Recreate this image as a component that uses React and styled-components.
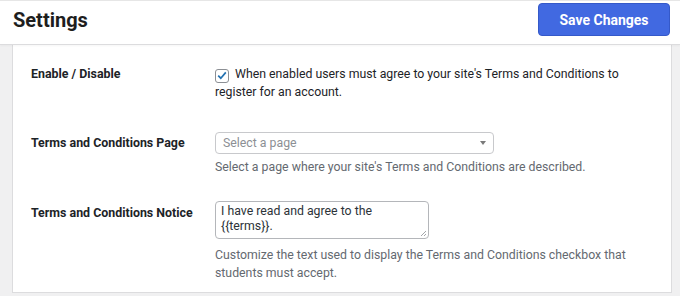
import React from "react";
import styled, { createGlobalStyle } from "styled-components";

const GlobalStyle = createGlobalStyle`
  html, body {
    margin: 0;
    padding: 0;
    background: #f0f0f1;
    font-family: Roboto, "Liberation Sans", Arial, sans-serif;
    color: #1d2327;
  }
`;

const Page = styled.div`
  width: 680px;
  height: 296px;
  overflow: hidden;
`;

const Header = styled.header`
  display: flex;
  flex-flow: row nowrap;
  justify-content: space-between;
  align-items: center;
  height: 33px;
  padding: 2px 10px 8px 13px;
  background: #ffffff;
  border-top: 1px solid #e6e6e6;
  border-bottom: 1px solid #dcdcde;
  box-shadow: 0 1px 2px rgba(0, 0, 0, 0.04);
  position: relative;
  z-index: 1;
`;

const Title = styled.h1`
  margin: 0;
  font-size: 20px;
  font-weight: 700;
  color: #1e1e1e;
`;

const SaveButton = styled.button`
  width: 132px;
  height: 33px;
  border: 1px solid #3559c9;
  border-radius: 4px;
  background: #4169e1;
  color: #ffffff;
  font-family: inherit;
  font-size: 14px;
  font-weight: 700;
  cursor: pointer;
`;

const Main = styled.main`
  padding: 0 8px 0 12px;
`;

const Card = styled.section`
  background: #ffffff;
  border: 1px solid #dcdcde;
  border-top: none;
  padding: 20px 18px 10px 18px;
`;

const Row = styled.div`
  display: grid;
  grid-template-columns: 184px 1fr;
  margin-top: ${(props) => props.$top || 0}px;
`;

const Label = styled.div`
  font-size: 12.4px;
  font-weight: 700;
  line-height: 18px;
  padding-top: ${(props) => props.$offset || 0}px;
  color: #1d2327;
`;

const Field = styled.div`
  font-size: 12.3px;
  line-height: 18px;
  color: #1d2327;
`;

const CheckText = styled.label`
  display: block;
`;

const Box = styled.span`
  display: inline-flex;
  align-items: center;
  justify-content: center;
  box-sizing: border-box;
  width: 14px;
  height: 14px;
  margin-right: 6px;
  vertical-align: -2px;
  border: 1px solid #8c8f94;
  border-radius: 3px;
  background: #ffffff;
`;

const SelectBox = styled.div`
  display: flex;
  align-items: center;
  justify-content: space-between;
  box-sizing: border-box;
  width: 279px;
  height: 22px;
  padding: 0 7px 0 7px;
  border: 1px solid #c8c9cc;
  border-radius: 4px;
  color: #8c8f94;
`;

const Caret = styled.span`
  width: 0;
  height: 0;
  border-left: 3.5px solid transparent;
  border-right: 3.5px solid transparent;
  border-top: 4px solid #7a7a7a;
`;

const Area = styled.div`
  position: relative;
  box-sizing: border-box;
  width: 214px;
  height: 38px;
  padding: 2px 5px;
  border: 1px solid #b4b6ba;
  border-radius: 4px;
  line-height: 15px;
  color: #2c3338;
`;

const Grip = styled.svg`
  position: absolute;
  right: 1px;
  bottom: 1px;
`;

const Help = styled.p`
  margin: ${(props) => props.$top || 4}px 0 0;
  color: #646970;
  font-size: 12.3px;
  line-height: 18px;
`;

export default function App() {
  return (
    <Page>
      <GlobalStyle />
      <Header>
        <Title>Settings</Title>
        <SaveButton>Save Changes</SaveButton>
      </Header>
      <Main>
        <Card>
          <Row>
            <Label>Enable / Disable</Label>
            <Field>
              <CheckText>
                <Box>
                  <svg width="10" height="9" viewBox="0 0 10 9">
                    <path d="M1.2 4.6 L3.8 7.2 L8.8 1.4" fill="none" stroke="#2271b1" strokeWidth="1.7" />
                  </svg>
                </Box>
                When enabled users must agree to your site's Terms and Conditions to register for an account.
              </CheckText>
            </Field>
          </Row>
          <Row $top={31}>
            <Label $offset={2}>Terms and Conditions Page</Label>
            <Field>
              <SelectBox>
                <span>Select a page</span>
                <Caret />
              </SelectBox>
              <Help>Select a page where your site's Terms and Conditions are described.</Help>
            </Field>
          </Row>
          <Row $top={25}>
            <Label $offset={3}>Terms and Conditions Notice</Label>
            <Field>
              <Area>
                I have read and agree to the
                <br />
                {"{{terms}}."}
                <Grip width="7" height="7" viewBox="0 0 7 7">
                  <path d="M6 1 L1 6 M6 4 L4 6" stroke="#8c8f94" strokeWidth="0.8" />
                </Grip>
              </Area>
              <Help $top={7}>
                Customize the text used to display the Terms and Conditions checkbox that students must accept.
              </Help>
            </Field>
          </Row>
        </Card>
      </Main>
    </Page>
  );
}
